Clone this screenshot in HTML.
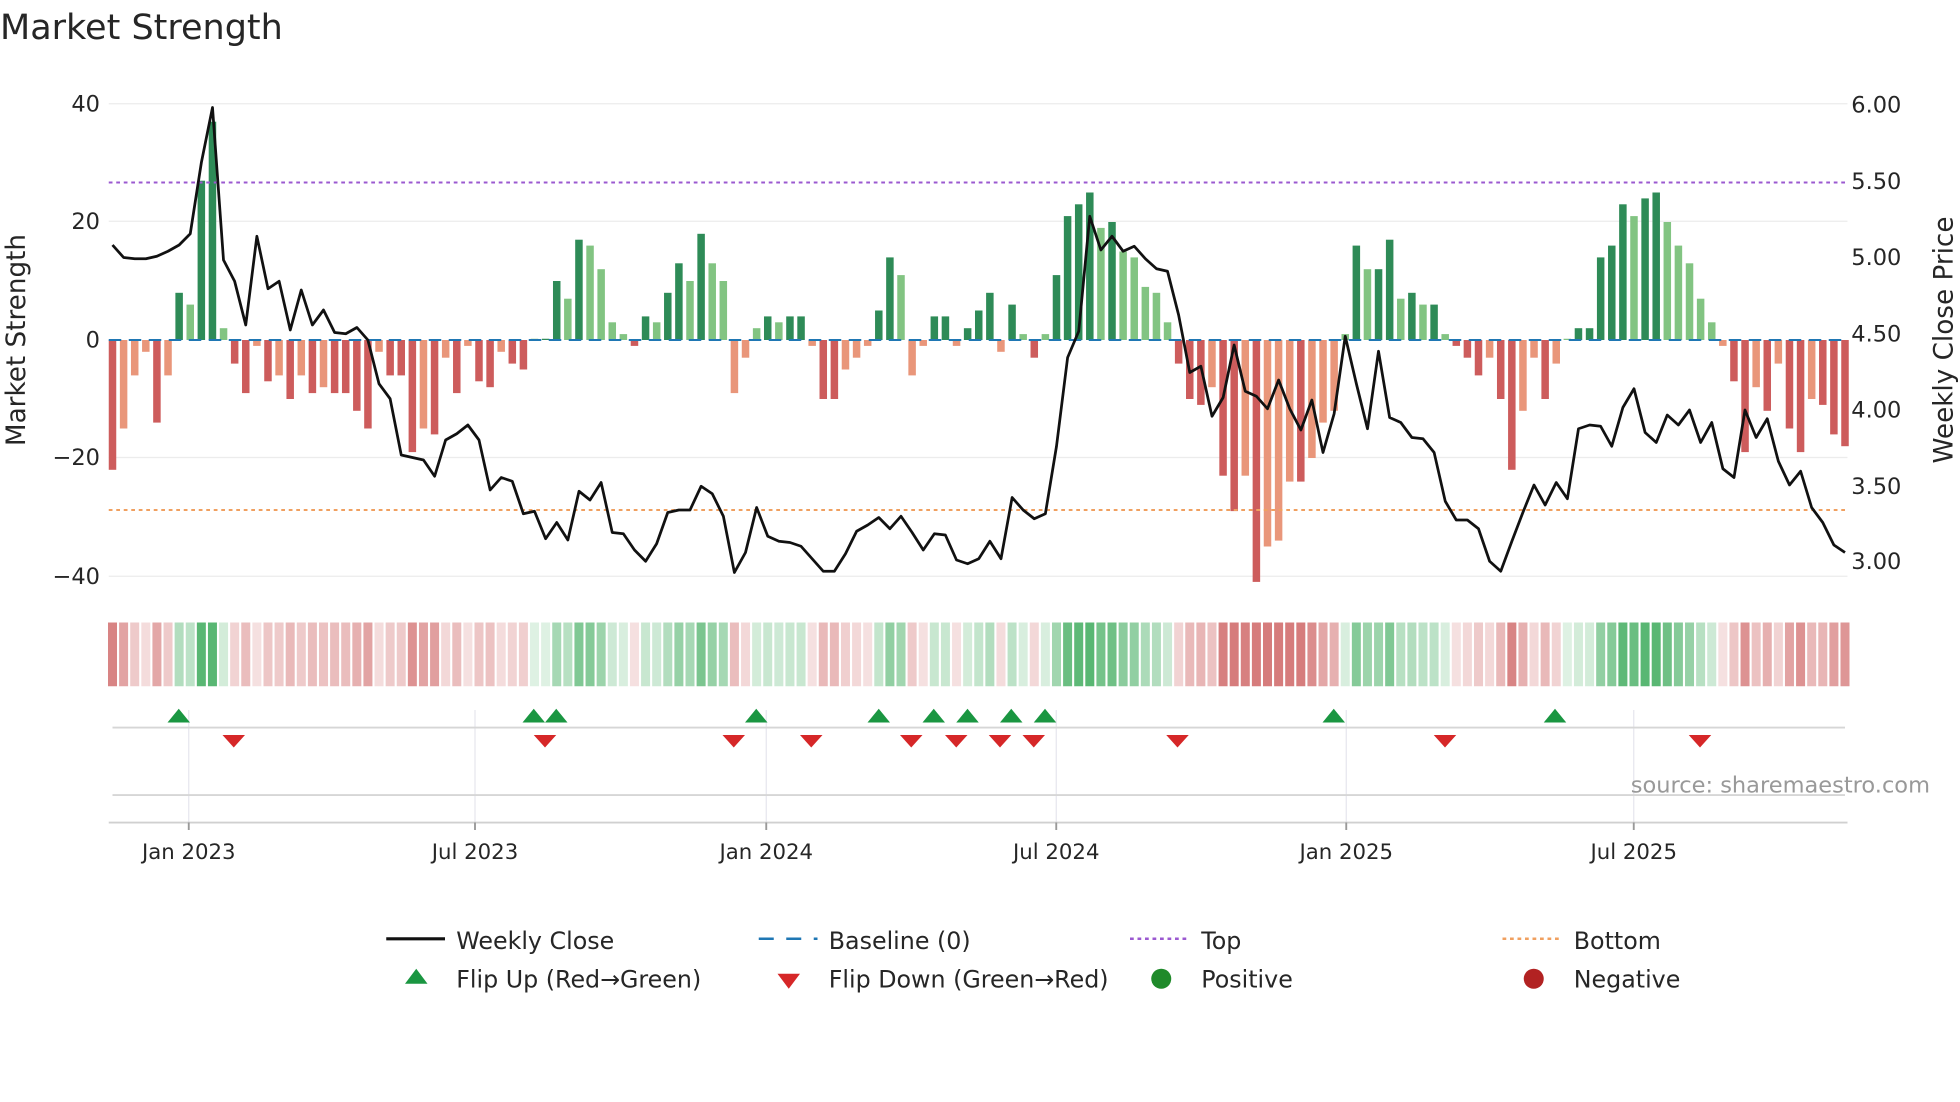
<!DOCTYPE html>
<html><head><meta charset="utf-8"><style>
html,body{margin:0;padding:0;background:#fff;width:1960px;height:1102px;overflow:hidden}
svg{display:block}
text{font-family:"DejaVu Sans","Liberation Sans",sans-serif;fill:#262626}
</style></head><body>
<svg id="s" width="1960" height="1102" viewBox="0 0 1568 881.6" xmlns="http://www.w3.org/2000/svg">
<text x="0" y="31" font-size="28" fill="#333">Market Strength</text>
<g stroke="#ececec" stroke-width="1">
<line x1="87" x2="1478" y1="83" y2="83"/><line x1="87" x2="1478" y1="177" y2="177"/><line x1="87" x2="1478" y1="366" y2="366"/><line x1="87" x2="1478" y1="461" y2="461"/>
</g>
<g font-size="18" text-anchor="end">
<text x="80" y="89">40</text><text x="80" y="183">20</text><text x="80" y="278">0</text><text x="80" y="372">−20</text><text x="80" y="467">−40</text>
</g>
<g font-size="18">
<text x="1481" y="90">6.00</text><text x="1481" y="151">5.50</text><text x="1481" y="212">5.00</text><text x="1481" y="273">4.50</text><text x="1481" y="334">4.00</text><text x="1481" y="395">3.50</text><text x="1481" y="455">3.00</text>
</g>
<text font-size="21" transform="translate(20,272) rotate(-90)" text-anchor="middle">Market Strength</text>
<text font-size="21" transform="translate(1562,272) rotate(-90)" text-anchor="middle">Weekly Close Price</text>
<g id="bars"></g>
<line x1="87" x2="1478" y1="272" y2="272" stroke="#1f77b4" stroke-width="1.6" stroke-dasharray="10,6"/>
<line x1="87" x2="1478" y1="146" y2="146" stroke="#9b59d0" stroke-width="1.6" stroke-dasharray="3,3"/>
<line x1="87" x2="1478" y1="408" y2="408" stroke="#f0a060" stroke-width="1.6" stroke-dasharray="3,3"/>
<polyline id="pl" fill="none" stroke="#111" stroke-width="2.2" stroke-linejoin="round"/>
<g id="heat"></g>
<g stroke="#e6e6ee" stroke-width="1">
<line x1="151" x2="151" y1="568" y2="658"/><line x1="380" x2="380" y1="568" y2="658"/><line x1="613" x2="613" y1="568" y2="658"/><line x1="845" x2="845" y1="568" y2="658"/><line x1="1077" x2="1077" y1="568" y2="658"/><line x1="1307" x2="1307" y1="568" y2="658"/>
</g>
<line x1="90" x2="1476" y1="582" y2="582" stroke="#d6d6d6" stroke-width="1.5"/>
<line x1="90" x2="1476" y1="636" y2="636" stroke="#d6d6d6" stroke-width="1.5"/>
<line x1="87" x2="1478" y1="658" y2="658" stroke="#d0d0d0" stroke-width="1.5"/>
<g stroke="#999" stroke-width="1.5">
<line x1="151" x2="151" y1="658" y2="664"/><line x1="380" x2="380" y1="658" y2="664"/><line x1="613" x2="613" y1="658" y2="664"/><line x1="845" x2="845" y1="658" y2="664"/><line x1="1077" x2="1077" y1="658" y2="664"/><line x1="1307" x2="1307" y1="658" y2="664"/>
</g>
<g id="flips"></g>
<text x="1544" y="634" font-size="18" text-anchor="end" fill="#999" style="fill:#999">source: sharemaestro.com</text>
<g font-size="17" text-anchor="middle">
<text x="151" y="687">Jan 2023</text><text x="380" y="687">Jul 2023</text><text x="613" y="687">Jan 2024</text><text x="845" y="687">Jul 2024</text><text x="1077" y="687">Jan 2025</text><text x="1307" y="687">Jul 2025</text>
</g>
<g font-size="19">
<line x1="309" x2="356" y1="751" y2="751" stroke="#111" stroke-width="2.5"/>
<text x="365" y="759">Weekly Close</text>
<polygon points="333,775 342,787 324,787" fill="#1a9641"/>
<text x="365" y="790">Flip Up (Red→Green)</text>
<line x1="607" x2="654" y1="751" y2="751" stroke="#1f77b4" stroke-width="2" stroke-dasharray="12,10"/>
<text x="663" y="759">Baseline (0)</text>
<polygon points="622,779 640,779 631,791" fill="#d62728"/>
<text x="663" y="790">Flip Down (Green→Red)</text>
<line x1="904" x2="951" y1="751" y2="751" stroke="#9b59d0" stroke-width="2" stroke-dasharray="3,3"/>
<text x="961" y="759">Top</text>
<circle cx="929" cy="783" r="8" fill="#1f8a2a"/>
<text x="961" y="790">Positive</text>
<line x1="1202" x2="1249" y1="751" y2="751" stroke="#f0a060" stroke-width="2" stroke-dasharray="3,3"/>
<text x="1259" y="759">Bottom</text>
<circle cx="1227" cy="783" r="8" fill="#b22222"/>
<text x="1259" y="790">Negative</text>
</g>
</svg>
<script>
var v=[-22,-15,-6,-2,-14,-6,8,6,27,37,2,-4,-9,-1,-7,-6,-10,-6,-9,-8,-9,-9,-12,-15,-2,-6,-6,-19,-15,-16,-3,-9,-1,-7,-8,-2,-4,-5,0,0,10,7,17,16,12,3,1,-1,4,3,8,13,10,18,13,10,-9,-3,2,4,3,4,4,-1,-10,-10,-5,-3,-1,5,14,11,-6,-1,4,4,-1,2,5,8,-2,6,1,-3,1,11,21,23,25,19,20,15,14,9,8,3,-4,-10,-11,-8,-23,-29,-23,-41,-35,-34,-24,-24,-20,-14,-12,1,16,12,12,17,7,8,6,6,1,-1,-3,-6,-3,-10,-22,-12,-3,-10,-4,0,2,2,14,16,23,21,24,25,20,16,13,7,3,-1,-7,-19,-8,-12,-4,-15,-19,-10,-11,-16,-18];
var n=v.length,x0=90,x1=1476,dx=(x1-x0)/(n-1),ns="http://www.w3.org/2000/svg";
function el(t,a,p){var e=document.createElementNS(ns,t);for(var k in a)e.setAttribute(k,a[k]);p.appendChild(e);return e;}
var B=document.getElementById('bars'),H=document.getElementById('heat'),F=document.getElementById('flips');
for(var i=0;i<n;i++){var x=x0+i*dx,val=v[i],prev=i?v[i-1]:0;var up=Math.abs(val)>=Math.abs(prev);
var c=val>=0?(up?'#2e8b57':'#82c482'):(up?'#cd5c5c':'#e9967a');
var h=Math.abs(val)*4.72;if(h<1)h=1;
el('rect',{x:x-3,y:val>=0?272-h:272,width:6,height:h,fill:c},B);
var a=Math.min(1,0.2+Math.abs(val)/30);
var hc=val>=0?'rgba(60,170,90,'+a*0.85+')':'rgba(200,80,80,'+a*0.75+')';
el('rect',{x:x-3.6,y:498,width:7.2,height:51,fill:hc},H);}
var p=[196,206,207,207,205,201,196,187,130,86,208,225,260,189,231,225,264,232,260,248,266,267,262,272,307,319,364,366,368,381,352,347,340,352,392,382,385,411,409,431,418,432,393,400,386,426,427,440,449,435,410,408,408,389,395,413,458,442,406,429,433,434,437,447,457,457,443,425,420,414,423,413,426,440,427,428,448,451,447,433,447,398,408,415,411,357,286,265,173,200,189,201,197,207,215,217,252,298,293,333,318,276,313,317,327,304,327,344,320,362,331,269,307,343,281,334,338,350,351,362,401,416,416,423,449,457,433,410,388,404,386,399,343,340,341,357,326,311,346,354,332,340,328,354,338,375,382,328,350,335,369,388,377,406,418,436,442];
var pdx=(x1-x0)/(p.length-1),pts=[];for(var j=0;j<p.length;j++)pts.push((x0+j*pdx).toFixed(1)+','+p[j]);
document.getElementById('pl').setAttribute('points',pts.join(' '));
[143,427,445,605,703,747,774,809,836,1067,1244].forEach(function(x){el('polygon',{points:(x-9)+',578 '+x+',567 '+(x+9)+',578',fill:'#1a9641'},F);});
[187,436,587,649,729,765,800,827,942,1156,1360].forEach(function(x){el('polygon',{points:(x-9)+',588 '+(x+9)+',588 '+x+',598',fill:'#d62728'},F);});
</script>
</body></html>
